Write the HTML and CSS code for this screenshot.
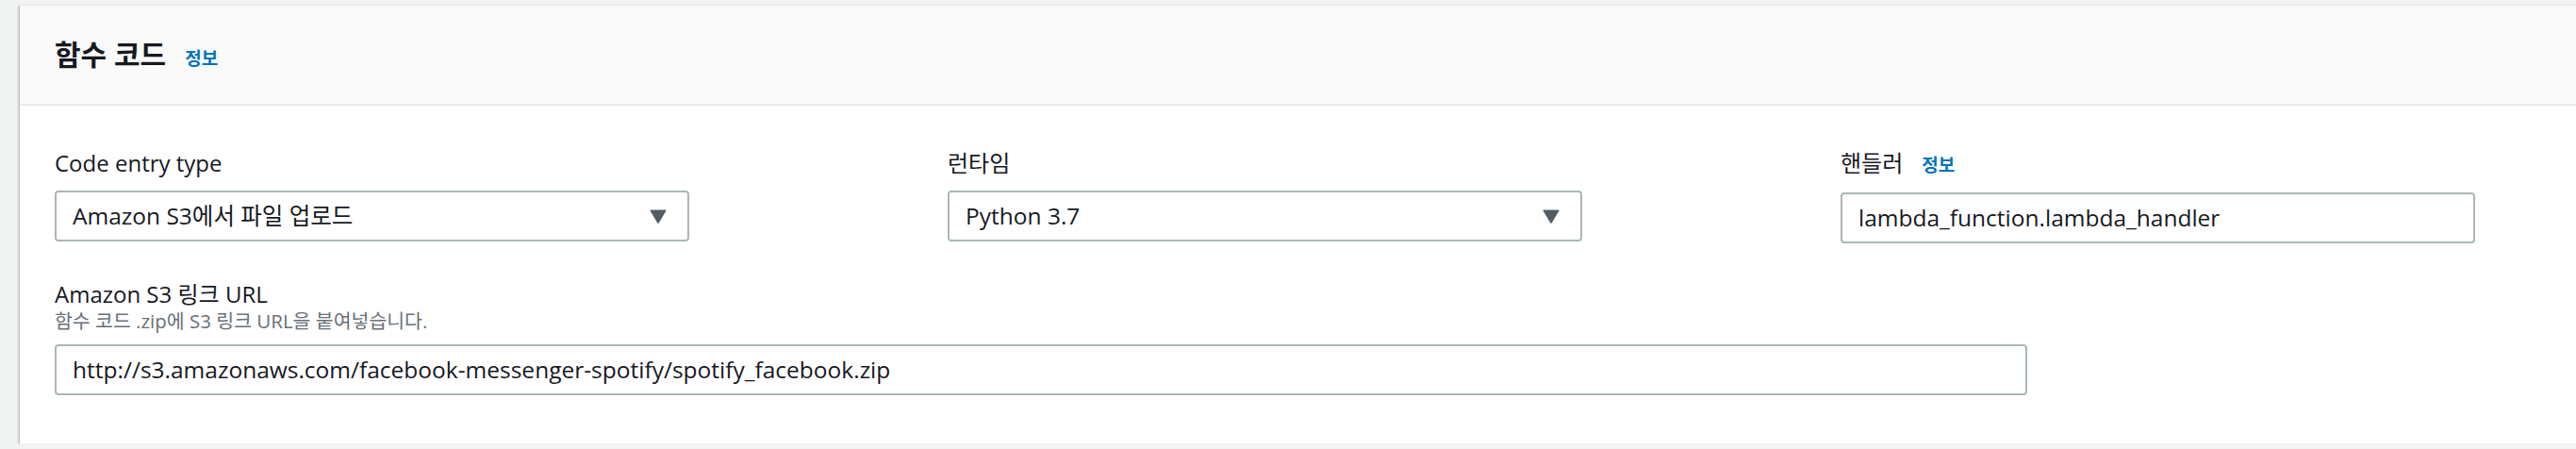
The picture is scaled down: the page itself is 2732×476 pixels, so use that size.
FILE: index.html
```html
<!DOCTYPE html>
<html lang="ko">
<head>
<meta charset="utf-8">
<title>함수 코드</title>
<link rel="stylesheet" href="styles.css">
</head>
<body>
<div class="page">
  <section class="panel">
    <header class="panel-header">
      <div class="title-group">
        <h2 class="panel-title">함수 코드</h2>
        <a class="info-link info-link-lg">정보</a>
      </div>
    </header>
    <div class="panel-body">
      <div class="row-grid">
        <div class="field">
          <div class="field-label">Code entry type</div>
          <div class="control select">
            <span class="control-text">Amazon S3에서 파일 업로드</span>
            <svg class="caret" width="18" height="15" viewBox="0 0 18 15"><path d="M1 0.5H17Q18 0.5 17.4 1.6L9.8 14.2Q9 15.2 8.2 14.2L0.6 1.6Q0 0.5 1 0.5Z" fill="#545b64"/></svg>
          </div>
        </div>
        <div class="field">
          <div class="field-label">런타임</div>
          <div class="control select">
            <span class="control-text">Python 3.7</span>
            <svg class="caret" width="18" height="15" viewBox="0 0 18 15"><path d="M1 0.5H17Q18 0.5 17.4 1.6L9.8 14.2Q9 15.2 8.2 14.2L0.6 1.6Q0 0.5 1 0.5Z" fill="#545b64"/></svg>
          </div>
        </div>
        <div class="field">
          <div class="field-label label-with-info"><span>핸들러</span><a class="info-link">정보</a></div>
          <div class="control">
            <span class="control-text">lambda_function.lambda_handler</span>
          </div>
        </div>
      </div>
      <div class="field field-url">
        <div class="field-label">Amazon S3 링크 URL</div>
        <div class="field-help">함수 코드 .zip에 S3 링크 URL을 붙여넣습니다.</div>
        <div class="control control-url">
          <span class="control-text">http://s3.amazonaws.com/facebook-messenger-spotify/spotify_facebook.zip</span>
        </div>
      </div>
    </div>
  </section>
</div>
</body>
</html>
```
FILE: styles.css
```css
html, body {
  margin: 0;
  padding: 0;
}
body {
  background: #f2f3f3;
  font-family: "Open Sans", "Noto Sans CJK KR", sans-serif;
  color: #16191f;
  overflow: hidden;
}
.page {
  padding: 4px 0 0 21px;
}
.panel {
  width: 2760px;
  background: #ffffff;
  border-top: 2px solid #eaeded;
  box-shadow: 0 2px 2px 0 rgba(0, 28, 36, 0.3), 2px 2px 2px 0 rgba(0, 28, 36, 0.15), -2px 2px 2px 0 rgba(0, 28, 36, 0.15);
}
.panel-header {
  height: 104px;
  background: #fafafa;
  border-bottom: 2px solid #eaeded;
  display: flex;
  align-items: center;
  padding-left: 37px;
}
.title-group {
  display: flex;
  align-items: baseline;
  gap: 20px;
}
.panel-title {
  margin: 0;
  font-size: 30px;
  font-weight: 700;
  line-height: 40px;
  color: #16191f;
}
.info-link {
  color: #0073bb;
  font-weight: 700;
  font-size: 19px;
  text-decoration: none;
}
.panel-body {
  padding: 45px 37px 51px;
}
.row-grid {
  display: grid;
  grid-template-columns: repeat(3, 673px);
  column-gap: 274px;
}
.field-label {
  font-size: 24px;
  line-height: 32px;
  margin-bottom: 13px;
}
.label-with-info {
  display: flex;
  align-items: baseline;
  gap: 20px;
}
.control {
  box-sizing: border-box;
  height: 54px;
  border: 2px solid #aab7b8;
  border-radius: 4px;
  background: #ffffff;
  display: flex;
  align-items: center;
  justify-content: space-between;
  padding: 0 22px 0 17px;
}
.control-text {
  font-size: 24.5px;
  line-height: 32px;
  white-space: nowrap;
}
.caret {
  display: block;
  flex: none;
}
.field-url {
  margin-top: 38px;
}
.field-url .field-label {
  margin-bottom: 0;
}
.field-help {
  font-size: 20.5px;
  line-height: 24px;
  color: #687078;
  margin-bottom: 13px;
}
.control-url {
  width: 2092px;
}
```
